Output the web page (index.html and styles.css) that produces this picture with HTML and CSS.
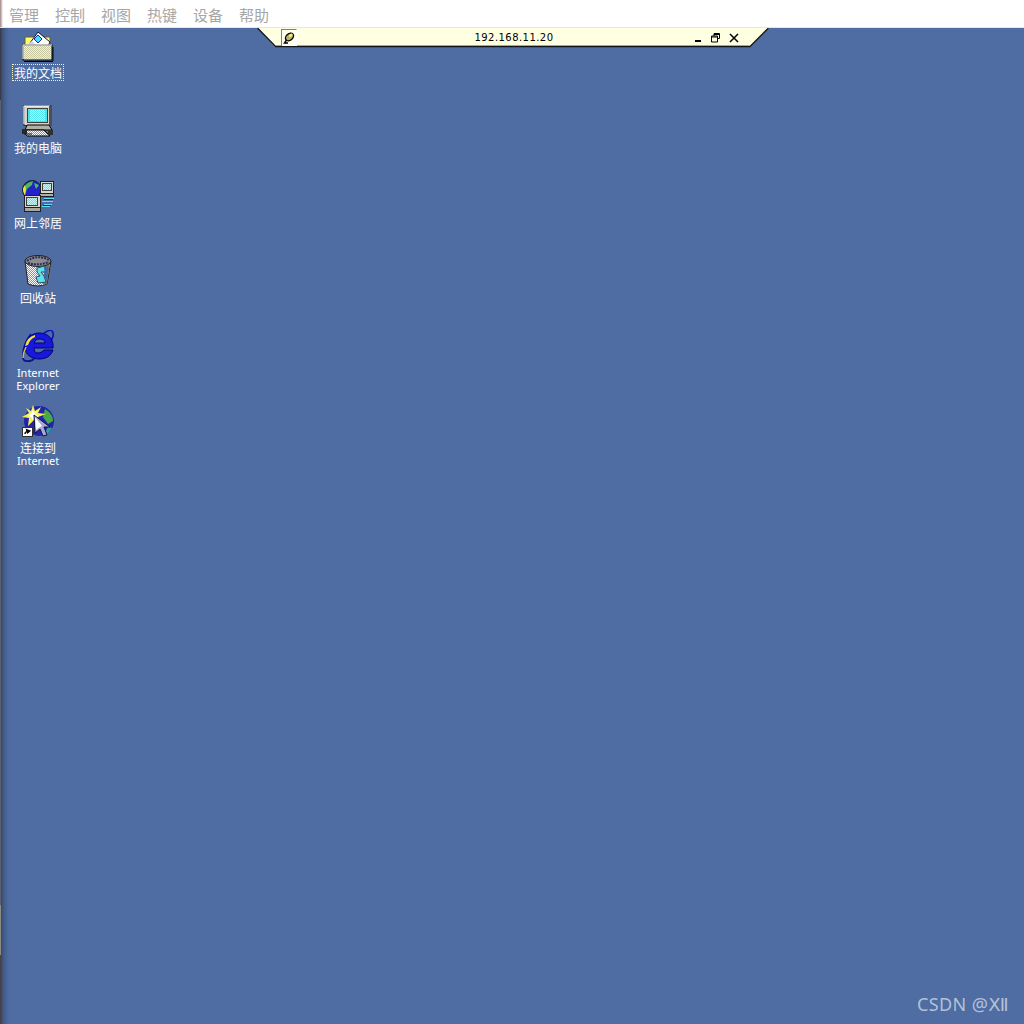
FILE: index.html
```html
<!DOCTYPE html>
<html lang="zh-CN">
<head>
<meta charset="utf-8">
<title>192.168.11.20</title>
<link rel="stylesheet" href="styles.css">
</head>
<body>
<svg class="defs" width="0" height="0" aria-hidden="true">
  <defs>
    <pattern id="dith-yellow" width="2" height="2" patternUnits="userSpaceOnUse">
      <rect width="2" height="2" fill="#ffff66"/><rect width="1" height="1" fill="#c8c8a0"/><rect x="1" y="1" width="1" height="1" fill="#c8c8a0"/>
    </pattern>
    <pattern id="dith-cyan" width="2" height="2" patternUnits="userSpaceOnUse">
      <rect width="2" height="2" fill="#50e8f0"/><rect width="1" height="1" fill="#c8f8f8"/><rect x="1" y="1" width="1" height="1" fill="#c8f8f8"/>
    </pattern>
    <pattern id="dith-gray" width="2" height="2" patternUnits="userSpaceOnUse">
      <rect width="2" height="2" fill="#ffffff"/><rect width="1" height="1" fill="#909090"/><rect x="1" y="1" width="1" height="1" fill="#909090"/>
    </pattern>
    <pattern id="dith-green" width="2" height="2" patternUnits="userSpaceOnUse">
      <rect width="2" height="2" fill="#2a2ad0"/><rect width="1" height="1" fill="#44cc44"/>
    </pattern>
  </defs>
</svg>

<header class="menubar">
  <span class="menu-item">管理</span>
  <span class="menu-item">控制</span>
  <span class="menu-item">视图</span>
  <span class="menu-item">热键</span>
  <span class="menu-item">设备</span>
  <span class="menu-item">帮助</span>
</header>

<main class="desktop">
  <div class="edge">
    <i class="seg seg-a"></i><i class="seg seg-b"></i><i class="seg seg-c"></i><i class="seg seg-d"></i>
  </div>

  <div class="connbar">
    <svg class="connbar-shape" width="512" height="20" viewBox="0 0 512 20" aria-hidden="true">
      <polygon points="0,0 18,19 493,19 512,0" fill="#ffffe1"/>
      <path d="M0.5 0 L18.5 18.5 H493 L511.5 0" fill="none" stroke="#10141c" stroke-width="1.4"/>
      <path d="M19 17.5 H492" stroke="#a8a890" stroke-width="1"/>
    </svg>
    <span class="pin">
      <svg width="12" height="12" viewBox="0 0 12 12" aria-hidden="true">
        <ellipse cx="6.500" cy="5" rx="4.500" ry="3.200" transform="rotate(-40 6.500 5)" fill="#b8b468" stroke="#000" stroke-width="1.400"/>
        <ellipse cx="7.800" cy="3.400" rx="2.200" ry="1.200" transform="rotate(-40 7.800 3.400)" fill="#fff070"/>
        <path d="M3.500 8 L1.500 11 H5" fill="none" stroke="#000" stroke-width="1.400"/>
      </svg>
    </span>
    <span class="conn-title">192.168.11.20</span>
    <span class="conn-buttons">
      <svg width="8" height="10" viewBox="0 0 8 10" aria-hidden="true"><rect x="1" y="7" width="6" height="2" fill="#000"/></svg>
      <svg width="9" height="10" viewBox="0 0 9 10" aria-hidden="true"><path d="M3 3 V.5 H8.500 V5.500 H6.500 M.5 3 H6.500 V9 H.5 Z M.5 4 H6.500 M3 1.500 H8.500" fill="none" stroke="#000"/></svg>
      <svg width="10" height="10" viewBox="0 0 10 10" aria-hidden="true"><path d="M1 1 L9 9 M9 1 L1 9" stroke="#000" stroke-width="1.500"/></svg>
    </span>
  </div>

  <section class="icons">
    <div class="tile">
      <svg class="icon" width="32" height="32" viewBox="0 -2 32 32" aria-hidden="true">
        <path d="M3 5 H28 V14 H3 Z" fill="#ffff66" stroke="#606030"/>
        <polygon points="8,11 16,0 28,10 26,14 8,14" fill="#fff" stroke="#10104a"/>
        <polygon points="16,3 20,7 16,11 12,7" fill="#40e0ff" stroke="#2020a0"/>
        <polygon points="5,13 10,9 14,13" fill="#d0d0ff"/>
        <rect x="1" y="13" width="29" height="15" fill="url(#dith-yellow)" stroke="#000"/>
        <path d="M1 13 H30 M1 13 V27" stroke="#fff"/>
        <path d="M2 29.500 H31 M31 15 V29" stroke="#000"/>
      </svg>
      <span class="label selected">我的文档</span>
    </div>
    <div class="tile">
      <svg class="icon" width="32" height="32" viewBox="0 0 32 32" aria-hidden="true">
        <rect x="2" y="0.500" width="27" height="20" fill="#d4d4c8" stroke="#303030"/>
        <path d="M2 1 H28 M2 1 V19" stroke="#fff"/>
        <rect x="5.500" y="3.500" width="20" height="14" fill="#50e0e8" stroke="#404040"/>
        <rect x="8" y="5" width="15" height="11" fill="url(#dith-cyan)"/>
        <rect x="27" y="1" width="2" height="20" fill="#505050"/>
        <polygon points="5,20 27,20 30,25 3,25" fill="#b0b0a8" stroke="#000"/>
        <polygon points="0,25 22,25 28,31 5,31" fill="url(#dith-gray)" stroke="#000"/>
        <rect x="0" y="24" width="5" height="5" fill="#282828"/>
        <rect x="26" y="25" width="5" height="5" fill="#303030"/>
        <path d="M2 29 H10" stroke="#181818"/>
      </svg>
      <span class="label">我的电脑</span>
    </div>
    <div class="tile">
      <svg class="icon" width="32" height="32" viewBox="0 0 32 32" aria-hidden="true">
        <circle cx="10" cy="10" r="9.500" fill="#2222c8" stroke="#102030"/>
        <path d="M1 9 Q4 2 11 1 L10 5 L5 9 L3 14 Z" fill="#50b850"/>
        <path d="M1 11 Q1 7 3 5 L4 10 L3 16 Z" fill="#f0e040"/>
        <path d="M12 3 L17 5 L14 9 Z" fill="#48c060"/>
        <rect x="18.500" y="1.500" width="13" height="12" fill="#d8d8d0" stroke="#202020"/>
        <rect x="20.500" y="3.500" width="9" height="7" fill="url(#dith-cyan)" stroke="#404040"/>
        <rect x="17.500" y="13.500" width="14" height="3" fill="#b0b0a8" stroke="#202020"/>
        <path d="M22 18.500 H32 M20 21.500 H31 M22 24.500 H30 M20 26.500 H28" stroke="#60e0ff"/>
        <path d="M22 19.500 H31 M21 25.500 H29" stroke="#202040"/>
        <rect x="2.500" y="15.500" width="16" height="12" fill="#d8d8d0" stroke="#202020"/>
        <rect x="4.500" y="17.500" width="11" height="8" fill="url(#dith-cyan)" stroke="#404040"/>
        <rect x="2.500" y="27.500" width="16" height="4" fill="#a8a8a0" stroke="#202020"/>
      </svg>
      <span class="label">网上邻居</span>
    </div>
    <div class="tile">
      <svg class="icon" width="32" height="32" viewBox="0 0 32 32" aria-hidden="true">
        <path d="M3 6 L6 29 Q16 33 25 29 L29 6 Z" fill="url(#dith-gray)" stroke="#202020"/>
        <path d="M23 8 L28 7 L25 29 L21 30 Z" fill="#707070"/>
        <ellipse cx="16" cy="6" rx="13" ry="5.500" fill="#8c8c8c" stroke="#202020"/>
        <path d="M5 6 Q15 -1 27 5 M6 8 Q16 11 27 7" fill="none" stroke="#282860" stroke-width="2" stroke-dasharray="2 1"/>
        <path d="M15 13 L23 11 L24 17 L19 17 L22 21 L24 27 L16 28 L14 22 L18 21 L15 17 Z" fill="#60e0e8" stroke="#2a5070"/>
        <path d="M22 12 H26 L25 25 H23 Z" fill="#3a6ca8"/>
      </svg>
      <span class="label">回收站</span>
    </div>
    <div class="tile">
      <svg class="icon" width="32" height="32" viewBox="0 0 32 32" aria-hidden="true">
        <path d="M22 3 Q28 -1 30 1 Q33 4 29 11" fill="none" stroke="#1010c0" stroke-width="1.600"/>
        <path d="M9 4 Q2 13 1 23 Q0 31 4 31 Q8 32 12 29" fill="none" stroke="#101090" stroke-width="1.800"/>
        <path d="M17 3 C8 3 3 11 3 17 C3 25 10 29 17 29 C24 29 29 26 31 20 L22 20 C20 22 18 23 16 23 C13 23 12 21 12 18 H31 C32 9 26 3 17 3 Z M12 13 C13 10 15 9 17 9 C20 9 23 10 23 13 Z" fill="#1818dc" fill-rule="evenodd" stroke="#000070"/>
        <path d="M3 16 Q5 7 13 5 L13 7 Q8 9 6 15 Z" fill="#f0e040"/>
        <path d="M4 17 Q1 23 1 28" fill="none" stroke="#c8c040" stroke-width="1.500"/>
      </svg>
      <span class="label"><span class="latin">Internet</span><span class="latin">Explorer</span></span>
    </div>
    <div class="tile">
      <svg class="icon" width="32" height="32" viewBox="0 0 32 32" aria-hidden="true">
        <circle cx="17" cy="16" r="15" fill="#2424a8"/>
        <path d="M23 4 Q31 9 31 16 L26 19 L21 12 Z" fill="#48a848"/>
        <path d="M26 22 L30 23 Q26 30 21 31 Z" fill="#30a0a0"/>
        <polygon points="11,0 13,6 19,2 16,8 24,9 16,12 19,19 12,15 6,21 7,13 0,12 7,8 4,3 9,6" fill="#f4f450"/>
        <polygon points="11,4 12,8 15,6 13,9 17,11 13,12 11,15 9,12 6,11 9,9" fill="#ffffff"/>
        <polygon points="12,10 13,28 18,24 21,31 25,30 22,22 28,22" fill="#a8a8d8" stroke="#101040"/>
        <polygon points="13,12 14,25 18,22 20,21" fill="#ffffff"/>
        <rect x="0.500" y="22.500" width="10" height="9" fill="#fff" stroke="#303030"/>
        <path d="M3 29 L3 28 Q3.500 26.500 6 26 M4.500 24.500 L8 26 L5.500 28 Z" fill="#000" stroke="#000" stroke-width="1.200"/>
      </svg>
      <span class="label">连接到<span class="latin">Internet</span></span>
    </div>
  </section>

  <div class="watermark">CSDN @Ⅻ</div>
</main>
</body>
</html>
```

FILE: styles.css
```css
* { box-sizing: border-box; }

html, body {
  margin: 0;
  height: 100%;
}

body {
  width: 1024px;
  height: 1024px;
  overflow: hidden;
  display: flex;
  flex-direction: column;
  background: #4f6da3;
  font-family: "Noto Sans CJK SC", "Noto Sans", sans-serif;
}

.defs { position: absolute; }

.menubar {
  flex: 0 0 28px;
  display: flex;
  align-items: center;
  gap: 16px;
  padding: 2px 0 0 9px;
  background: linear-gradient(to right, #a08080, #fff 3px);
  border-bottom: 1px solid #e6e6e6;
}

.menu-item {
  font-size: 15px;
  line-height: 20px;
  color: #a6a6a6;
}

.desktop {
  position: relative;
  flex: 1;
  background: #4f6da3;
}

.edge {
  position: absolute;
  left: 0;
  top: 0;
  bottom: 0;
  width: 9px;
  display: flex;
  flex-direction: column;
  background: linear-gradient(to right, rgba(30, 34, 50, .6), rgba(30, 34, 50, .25) 40%, rgba(30, 34, 50, 0));
  pointer-events: none;
}

.seg { display: block; width: 1px; }
.seg-a { height: 72px; background: #3a3a48; }
.seg-b { height: 805px; background: #5a6070; }
.seg-c { height: 50px; background: #8c8c84; }
.seg-d { flex: 1; background: #4a4048; }

.connbar {
  position: absolute;
  left: 257px;
  top: 0;
  width: 512px;
  height: 20px;
  display: grid;
  grid-template-columns: 1fr auto 1fr;
  align-items: center;
  padding: 0 30px 1px 24px;
}

.connbar-shape {
  position: absolute;
  left: 0;
  top: 0;
}

.pin {
  position: relative;
  justify-self: start;
  width: 16px;
  height: 17px;
  display: flex;
  align-items: center;
  justify-content: center;
  border-left: 1px solid #808070;
  border-top: 1px solid #808070;
  border-right: 1px solid #fff;
  background: #fffff0;
}

.conn-title {
  position: relative;
  text-align: center;
  font-family: "DejaVu Sans", sans-serif;
  font-size: 10px;
  letter-spacing: 0.45px;
  color: #000;
  margin-left: 8px;
}

.conn-buttons {
  position: relative;
  justify-self: end;
  display: flex;
  align-items: center;
  gap: 9px;
}

.icons {
  display: flex;
  flex-direction: column;
  width: 76px;
}

.tile {
  height: 75px;
  padding-top: 2px;
  display: flex;
  flex-direction: column;
  align-items: center;
}

.icon { display: block; flex: none; }

.label {
  margin-top: 4px;
  font-family: "Noto Sans CJK SC", "Noto Sans", sans-serif;
  font-size: 12px;
  line-height: 13px;
  color: #fff;
  text-align: center;
  white-space: nowrap;
}

.latin {
  display: block;
  font-family: "Noto Sans", "DejaVu Sans", sans-serif;
  font-size: 11px;
  line-height: 13px;
}

.selected {
  outline: 1px dotted #f4f4c0;
  outline-offset: 1px;
}

.watermark {
  position: absolute;
  right: 15px;
  bottom: 8px;
  font-family: "Noto Sans", "DejaVu Sans", sans-serif;
  font-size: 18px;
  line-height: 24px;
  letter-spacing: .4px;
  color: rgba(222, 226, 232, .72);
}
```
